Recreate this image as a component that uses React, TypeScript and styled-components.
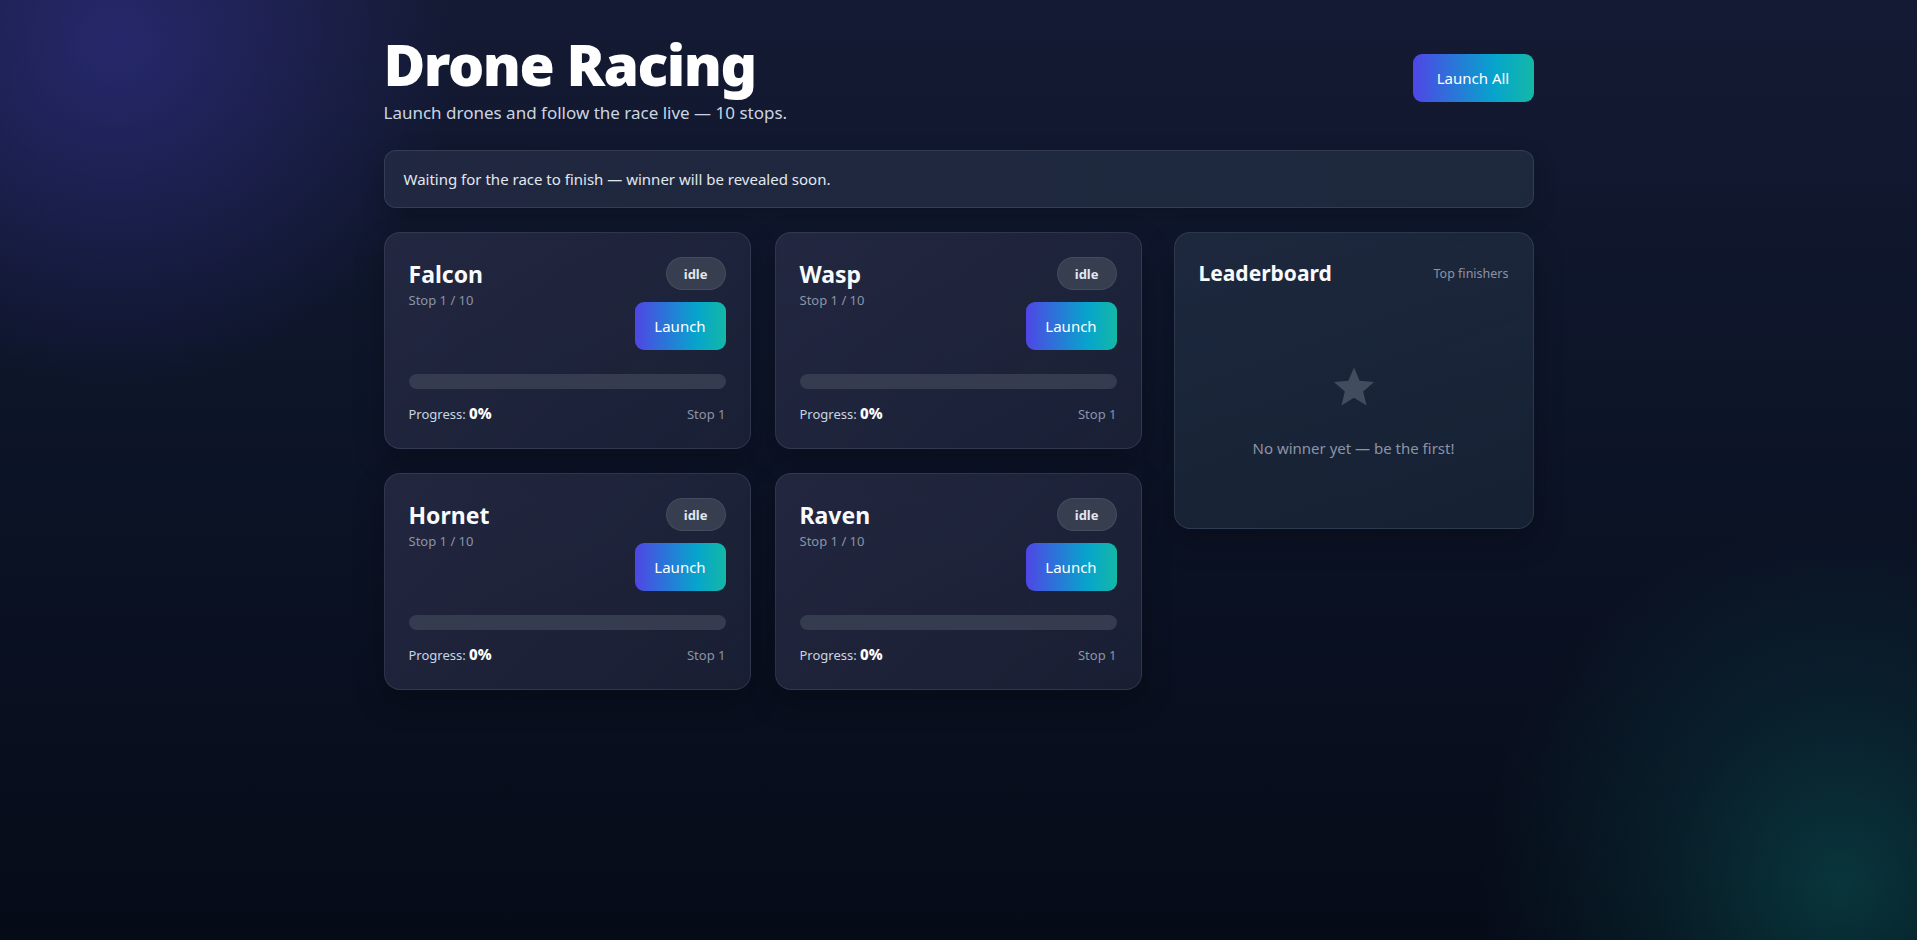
import { createGlobalStyle, styled } from 'styled-components'

const GlobalStyle = createGlobalStyle`
  html, body {
    margin: 0;
    padding: 0;
    min-height: 100%;
  }
  body {
    font-family: 'Segoe UI', 'Noto Sans', 'Open Sans', sans-serif;
    color: #f8fafc;
    background: #0b1122;
  }
  * {
    box-sizing: border-box;
  }
`

const Page = styled.div`
  min-height: 940px;
  padding: 26px 0 40px;
  background:
    radial-gradient(circle at 6% 5%, rgba(79, 70, 229, 0.32) 0, rgba(79, 70, 229, 0) 340px),
    radial-gradient(circle at 96% 94%, rgba(13, 148, 136, 0.3) 0, rgba(13, 148, 136, 0.12) 180px, rgba(13, 148, 136, 0) 360px),
    linear-gradient(180deg, #141a33 0%, #0d1529 40%, #060b18 100%);
`
const Wrap = styled.div`
  max-width: 1150px;
  margin: 0 auto;
  width: 100%;
`
const Header = styled.header`
  display: flex;
  justify-content: space-between;
  align-items: center;
`
const Title = styled.h1`
  margin: 0;
  font-size: 57px;
  font-weight: 900;
  line-height: 1.36;
  letter-spacing: -1.5px;
  color: #ffffff;
`
const Subtitle = styled.p`
  margin: 0;
  font-size: 17px;
  line-height: 1.1;
  color: #cbd5e1;
`
const GradientButton = styled.button<{ $w: number }>`
  width: ${(p) => p.$w}px;
  height: 48px;
  border: none;
  border-radius: 9px;
  background: linear-gradient(90deg, #4f46e5 0%, #06a5cc 68%, #14b8a6 100%);
  color: #ffffff;
  font-family: inherit;
  font-size: 15px;
  cursor: pointer;
`
const HeaderButton = styled(GradientButton)`
  margin-top: 8px;
`
const Banner = styled.div`
  margin-top: 28px;
  height: 58px;
  display: flex;
  align-items: center;
  padding: 0 19px;
  border-radius: 12px;
  background: linear-gradient(90deg, rgba(38, 45, 70, 0.75), rgba(36, 48, 68, 0.7));
  border: 1px solid rgba(148, 163, 184, 0.18);
  font-size: 15px;
  color: #e2e8f0;
  box-shadow: 0 8px 24px rgba(0, 0, 0, 0.2);
`
const Main = styled.main`
  margin-top: 24px;
  display: flex;
  gap: 32px;
  align-items: flex-start;
`
const CardGrid = styled.div`
  flex: 1;
  display: grid;
  grid-template-columns: 1fr 1fr;
  gap: 24px;
`
const Panel = styled.section`
  border-radius: 16px;
  border: 1px solid rgba(148, 163, 184, 0.16);
  padding: 24px;
  box-shadow: 0 12px 30px rgba(0, 0, 0, 0.25);
`
const Card = styled(Panel)`
  height: 217px;
  background: linear-gradient(135deg, rgba(40, 44, 70, 0.8), rgba(30, 36, 58, 0.75));
`
const CardTop = styled.div`
  display: flex;
  justify-content: space-between;
  align-items: flex-start;
`
const Name = styled.h2`
  margin: 4px 0 0;
  font-size: 23px;
  font-weight: 700;
  line-height: 1.2;
  color: #f8fafc;
`
const Meta = styled.div`
  margin-top: 2px;
  font-size: 13px;
  color: #8b94a7;
`
const Actions = styled.div`
  display: flex;
  flex-direction: column;
  align-items: flex-end;
  gap: 12px;
`
const Pill = styled.span`
  display: inline-flex;
  align-items: center;
  justify-content: center;
  height: 33px;
  padding: 0 17px;
  border-radius: 999px;
  background: #373e50;
  border: 1px solid rgba(148, 163, 184, 0.15);
  font-size: 13px;
  font-weight: 700;
  color: #e2e8f0;
`
const Track = styled.div`
  margin-top: 24px;
  height: 15px;
  border-radius: 999px;
  background: #353c50;
  overflow: hidden;
`
const Fill = styled.div`
  height: 100%;
  background: linear-gradient(90deg, #4f46e5, #14b8a6);
`
const CardFoot = styled.div`
  margin-top: 14px;
  display: flex;
  justify-content: space-between;
  align-items: baseline;
  font-size: 13px;
  color: #cbd5e1;

  strong {
    font-size: 15px;
    font-weight: 800;
    color: #ffffff;
  }
`
const StopText = styled.span`
  color: #8b94a7;
`
const Board = styled(Panel)`
  width: 360px;
  flex-shrink: 0;
  height: 297px;
  background: linear-gradient(160deg, rgba(33, 45, 66, 0.8), rgba(26, 38, 56, 0.75));
`
const BoardHead = styled.div`
  display: flex;
  justify-content: space-between;
  align-items: center;
  margin-top: 2px;
`
const BoardTitle = styled.h2`
  margin: 0;
  font-size: 21px;
  font-weight: 700;
  color: #f8fafc;
`
const BoardHint = styled.span`
  font-size: 12.5px;
  color: #8b94a7;
`
const Empty = styled.div`
  display: flex;
  flex-direction: column;
  align-items: center;
  padding-top: 79px;
  gap: 30px;
  font-size: 15px;
  color: #8b94a7;
`

const drones = ['Falcon', 'Wasp', 'Hornet', 'Raven']

function DroneCard({ name }: { name: string }) {
  const progress = 0
  return (
    <Card>
      <CardTop>
        <div>
          <Name>{name}</Name>
          <Meta>Stop 1 / 10</Meta>
        </div>
        <Actions>
          <Pill>idle</Pill>
          <GradientButton $w={91}>Launch</GradientButton>
        </Actions>
      </CardTop>
      <Track>
        <Fill style={{ width: `${progress}%` }} />
      </Track>
      <CardFoot>
        <span>
          Progress: <strong>{progress}%</strong>
        </span>
        <StopText>Stop 1</StopText>
      </CardFoot>
    </Card>
  )
}

export default function App() {
  return (
    <Page>
      <GlobalStyle />
      <Wrap>
        <Header>
          <div>
            <Title>Drone Racing</Title>
            <Subtitle>Launch drones and follow the race live — 10 stops.</Subtitle>
          </div>
          <HeaderButton $w={121}>Launch All</HeaderButton>
        </Header>

        <Banner>Waiting for the race to finish — winner will be revealed soon.</Banner>

        <Main>
          <CardGrid>
            {drones.map((d) => (
              <DroneCard key={d} name={d} />
            ))}
          </CardGrid>
          <Board>
            <BoardHead>
              <BoardTitle>Leaderboard</BoardTitle>
              <BoardHint>Top finishers</BoardHint>
            </BoardHead>
            <Empty>
              <svg width="44" height="42" viewBox="0 0 24 23" aria-hidden="true">
                <path
                  d="M12 0.8l3.1 7.3 7.9 0.6-6 5.2 1.9 7.7L12 17.4l-6.9 4.2 1.9-7.7-6-5.2 7.9-0.6z"
                  fill="#414c5f"
                />
              </svg>
              No winner yet — be the first!
            </Empty>
          </Board>
        </Main>
      </Wrap>
    </Page>
  )
}
